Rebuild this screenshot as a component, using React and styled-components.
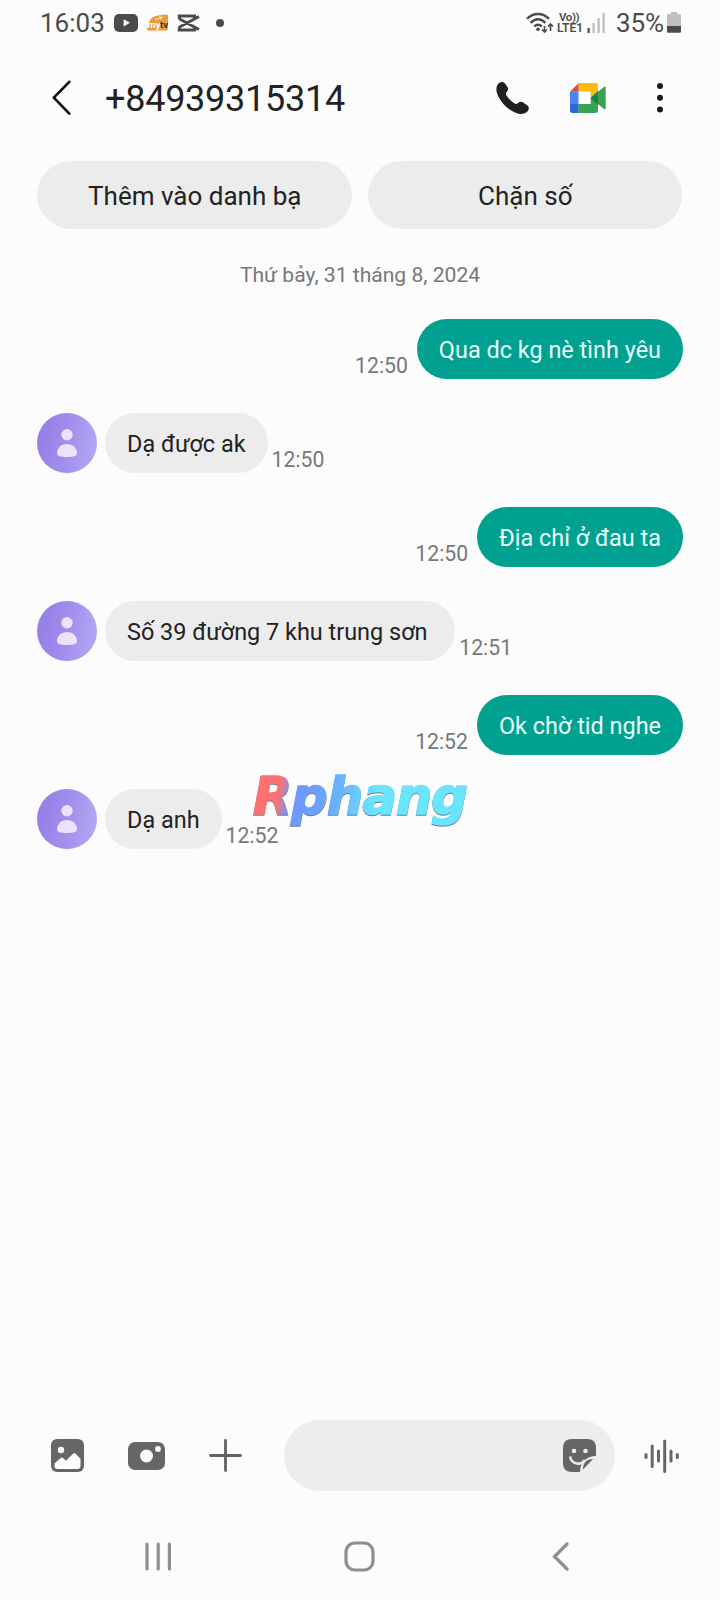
import React from "react";
import styled, { createGlobalStyle } from "styled-components";

const messages = [
  { id: 1, text: "Qua dc kg nè tình yêu", time: "12:50", sent: true },
  { id: 2, text: "Dạ được ak", time: "12:50", sent: false },
  { id: 3, text: "Địa chỉ ở đau ta", time: "12:50", sent: true },
  { id: 4, text: "Số 39 đường 7 khu trung sơn ", time: "12:51", sent: false },
  { id: 5, text: "Ok chờ tid nghe", time: "12:52", sent: true },
  { id: 6, text: "Dạ anh", time: "12:52", sent: false },
];

const StatusBar = () => (
  <Status>
    <StatusTime>16:03</StatusTime>
    <StatusIcons>
      <svg width="24" height="18" viewBox="0 0 24 18">
        <rect width="24" height="18" rx="5" fill="#4b4b4b" />
        <path d="M9.7 5.2v7.2l6.3-3.6z" fill="#fcfcfc" />
      </svg>
      <svg width="21" height="17" viewBox="0 0 21 17">
        <path
          d="M0 15.5C1 8 4 3.5 8 2.2 12 1 17 .4 19 .4c1.5 0 2 .6 2 2v12c0 1.5-.8 2.2-2 2.2H2c-1.2 0-2-.3-2-1.1z"
          fill="#ee9a3c"
        />
        <path d="M8 5.8 16 3M12.500 2l2 3.500" stroke="#fbe3c0" strokeWidth="1.2" />
        <text x="0.5" y="13.5" fontSize="9.5" fontWeight="700" fill="#fff">
          my
        </text>
        <text x="13" y="13.5" fontSize="9.5" fontWeight="700" fill="#3c3c3c">
          tv
        </text>
      </svg>
      <svg width="23" height="18" viewBox="0 0 23 18" fill="none" stroke="#4b4b4b">
        <path
          d="M22 2.5 3.500 12.5c-1 .6-1.300 1-1.300 2V16h15.300v-2.500M22 15.500 3.500 5.500c-1-.6-1.300-1-1.300-2V2h15.300v2.500"
          strokeWidth="3"
        />
      </svg>
      <Dot />
    </StatusIcons>
    <StatusRight>
      <svg width="28" height="22" viewBox="0 0 28 22" fill="none" stroke="#4b4b4b">
        <path d="M1 6.8C7.5.4 16.500.4 23 6.800" strokeWidth="2.4" />
        <path d="M4.600 10.800c4.700-4.400 10.100-4.400 14.800 0" strokeWidth="2.4" />
        <path d="M8.200 14.400c2.500-2.200 5.100-2.200 7.600 0" strokeWidth="2.4" />
        <circle cx="12" cy="17.300" r="1.8" fill="#4b4b4b" stroke="none" />
        <path
          d="M18.500 14v6M16 17.500l2.500 2.500 2.500-2.500M24.500 19v-6M22 14.500l2.500-2.500 2.500 2.500"
          strokeWidth="1.7"
        />
      </svg>
      <Volte>
        <span>Vo))</span>
        <span>LTE1</span>
      </Volte>
      <svg width="20" height="20" viewBox="0 0 20 20">
        <rect x="0.500" y="15" width="2.200" height="5" fill="#4b4b4b" />
        <rect x="5.500" y="10" width="2.200" height="10" fill="#bcbcbc" />
        <rect x="10.500" y="5" width="2.200" height="15" fill="#bcbcbc" />
        <rect x="15.500" y="0" width="2.200" height="20" fill="#bcbcbc" />
      </svg>
      <Percent>35%</Percent>
      <svg width="14" height="21" viewBox="0 0 14 21">
        <path
          d="M4 0h6v2h2.500c1 0 1.500.5 1.500 1.500V14H0V3.500C0 2.500.5 2 1.500 2H4z"
          fill="#bfbfbf"
        />
        <path
          d="M0 14h14v5.200c0 1-.5 1.500-1.500 1.500h-11c-1 0-1.500-.5-1.500-1.500z"
          fill="#4b4b4b"
        />
      </svg>
    </StatusRight>
  </Status>
);

const Header = () => (
  <HeaderBar>
    <svg width="19" height="36" viewBox="0 0 19 36" fill="none">
      <path
        d="M17.300 1.800 1.800 17.700l15.500 15.900"
        stroke="#0a0a0a"
        strokeWidth="2.6"
        strokeLinecap="round"
        strokeLinejoin="round"
      />
    </svg>
    <Title>+84939315314</Title>
    <HeaderActions>
      <svg width="34" height="34" viewBox="0 0 34 34">
        <path
          d="M2.500 2.600C4.200.9 6.800.1 8.600 1.900l2.700 3.800c1.300 2 .9 3.600-.4 5.100-1.200 1.300-1.200 2.200-.5 3.400 1.600 2.900 5.300 6.700 8.200 8.300 1.300.7 2.300.5 3.500-.6 1.500-1.300 3.200-1.600 5.100-.4l4.200 3c2 1.700 1.700 4 .2 5.700-2.300 2.500-5.600 3.300-9.200 2.500C12.500 30.200 3 20 .7 11 0 7.700.5 4.700 2.500 2.600z"
          fill="#1f1f1f"
        />
      </svg>
      <svg width="36" height="30" viewBox="0 0 36 30">
        <path d="M0 8.700h8.700V0z" fill="#e04a3a" />
        <path d="M0 8.700h8.700V21H0z" fill="#4a84f0" />
        <path d="M0 21h8.700v9H2.500C1 30 0 29 0 27.500z" fill="#2f66cf" />
        <path d="M8.700 0h17C27.200 0 28 1 28 2.500V8l-7.500 7V8.700H8.700z" fill="#fbbc0c" />
        <path d="M8.700 21h11.800v-6l7.500 6v6.500c0 1.500-.8 2.500-2.300 2.500h-17z" fill="#35a453" />
        <path d="m28 8.500 6-4.600c1-.7 1.700-.4 1.700.7v20.800c0 1.100-.8 1.400-1.700.7L28 21z" fill="#35a453" />
        <path d="M28 8v14l-7.700-7z" fill="#1d8240" />
        <path d="M8.700 8.700h11.800V21H8.700z" fill="#fff" />
      </svg>
      <svg width="8" height="32" viewBox="0 0 8 32" fill="#1a1a1a">
        <circle cx="4" cy="4" r="3" />
        <circle cx="4" cy="15.700" r="3" />
        <circle cx="4" cy="27.500" r="3" />
      </svg>
    </HeaderActions>
  </HeaderBar>
);

const ContactAvatar = () => (
  <Avatar>
    <svg width="20" height="28" viewBox="0 0 20 28" fill="#ebe3fd">
      <circle cx="10" cy="5.700" r="5.700" />
      <path d="M0 24.500C0 19 4 15 10 15s10 4 10 9.500c0 2.500-4 3.500-10 3.500S0 27 0 24.500z" />
    </svg>
  </Avatar>
);

const Message = ({ message }) => (
  <MessageRow $sent={message.sent}>
    {!message.sent && <ContactAvatar />}
    <Bubble $sent={message.sent}>{message.text}</Bubble>
    <Time $sent={message.sent}>{message.time}</Time>
  </MessageRow>
);

const Composer = () => (
  <ComposerBar>
    <svg width="33" height="33" viewBox="0 0 33 33">
      <rect width="33" height="33" rx="6" fill="#666" />
      <circle cx="10" cy="11" r="3.200" fill="#fcfcfc" />
      <path
        d="m3.500 24.500 6.200-5.400c.8-.6 1.500-.6 2.200 0l3 2.600 7.200-7c.9-.8 1.700-.8 2.500 0l4.900 5V27c0 2-1 3-3 3h-20c-2 0-3-1-3-3z"
        fill="#fcfcfc"
      />
    </svg>
    <svg width="37" height="28" viewBox="0 0 37 28">
      <rect width="37" height="28" rx="7" fill="#666" />
      <circle cx="18.500" cy="14" r="6.500" fill="#fcfcfc" />
      <circle cx="30" cy="7" r="2.900" fill="#fcfcfc" />
    </svg>
    <svg width="33" height="33" viewBox="0 0 33 33">
      <path
        d="M16.500 1.500v30M1.500 16.500h30"
        stroke="#626262"
        strokeWidth="2.8"
        strokeLinecap="round"
      />
    </svg>
    <MessageField>
      <svg width="33" height="33" viewBox="0 0 33 33" fill="none">
        <path
          d="M9 0h15c6 0 9 3 9 9v8c-9 0-16 6-16 16H9c-6 0-9-3-9-9V9c0-6 3-9 9-9z"
          fill="#666"
        />
        <circle cx="11" cy="12" r="2.300" fill="#ededed" />
        <circle cx="22.500" cy="12" r="2.300" fill="#ededed" />
        <path d="M7 17.500c2 8.500 11 9 15 3.500" stroke="#ededed" strokeWidth="2.5" />
        <path d="M20 30.500C20 24 23.500 20 30 20z" fill="#666" />
      </svg>
    </MessageField>
    <svg
      width="36"
      height="34"
      viewBox="0 0 36 34"
      stroke="#666"
      strokeWidth="3"
      strokeLinecap="round"
    >
      <path d="M2 15.500v3M8.200 7v20.500M14.500 12v10M20.700 2v30.500M27 12v10M33.300 15.500v3" />
    </svg>
  </ComposerBar>
);

const NavigationBar = () => (
  <NavBar>
    <svg width="27" height="29" viewBox="0 0 27 29">
      <path
        d="M2 2v25M13.200 2v25M24.400 2v25"
        stroke="#8e8e8e"
        strokeWidth="3.2"
        strokeLinecap="round"
      />
    </svg>
    <svg width="31" height="31" viewBox="0 0 31 31" fill="none">
      <rect x="2" y="2" width="27" height="27" rx="9" stroke="#8e8e8e" strokeWidth="3.2" />
    </svg>
    <svg width="17" height="29" viewBox="0 0 17 29" fill="none">
      <path
        d="M15 2 2.500 14.500 15 27"
        stroke="#8e8e8e"
        strokeWidth="3.2"
        strokeLinecap="round"
      />
    </svg>
  </NavBar>
);

const App = () => (
  <>
    <GlobalStyle />
    <Screen>
      <StatusBar />
      <Header />
      <ContactActions>
        <PillButton>Thêm vào danh bạ</PillButton>
        <PillButton>Chặn số</PillButton>
      </ContactActions>
      <DateLabel>Thứ bảy, 31 tháng 8, 2024</DateLabel>
      <Conversation>
        {messages.map((message) => (
          <Message key={message.id} message={message} />
        ))}
        <Watermark>Rphang</Watermark>
      </Conversation>
      <Composer />
      <NavigationBar />
    </Screen>
  </>
);

// Styled Components
const GlobalStyle = createGlobalStyle`
  * {
    box-sizing: border-box;
  }

  body {
    margin: 0;
    background: #fcfcfc;
    font-family: Roboto, "Noto Sans", sans-serif;
  }

  svg {
    display: block;
    flex-shrink: 0;
  }
`;

const Screen = styled.div`
  display: flex;
  flex-direction: column;
  width: 720px;
  height: 1600px;
  overflow: hidden;
  background: #fcfcfc;
`;

const Status = styled.div`
  display: flex;
  align-items: center;
  height: 45px;
  padding: 0 39px 0 40px;
  color: #4b4b4b;
`;

const StatusTime = styled.span`
  width: 74px;
  font-size: 26px;
  line-height: 30px;
`;

const StatusIcons = styled.div`
  display: flex;
  align-items: center;
  gap: 9px;
`;

const Dot = styled.span`
  width: 8px;
  height: 8px;
  margin-left: 7px;
  border-radius: 50%;
  background: #4b4b4b;
`;

const StatusRight = styled.div`
  display: flex;
  align-items: center;
  margin-left: auto;
`;

const Volte = styled.div`
  display: flex;
  flex-direction: column;
  width: 26px;
  margin: 0 4px 0 3px;
  font-size: 12px;
  font-weight: 600;
  line-height: 11px;
  white-space: nowrap;

  span:first-child {
    padding-left: 2px;
    font-size: 11.5px;
    letter-spacing: -0.4px;
  }
`;

const Percent = styled.span`
  margin: 0 3px 0 9px;
  font-size: 26px;
  line-height: 30px;
  letter-spacing: -0.1px;
`;

const HeaderBar = styled.header`
  display: flex;
  align-items: center;
  height: 106px;
  padding: 0 56px 0 52px;
`;

const Title = styled.h1`
  margin: 2px 0 0 34px;
  color: #222;
  font-size: 36px;
  font-weight: 400;
  line-height: 44px;
  letter-spacing: -0.25px;
`;

const HeaderActions = styled.div`
  display: flex;
  align-items: center;
  gap: 40px;
  margin-left: auto;

  svg:last-child {
    margin-left: 10px;
  }
`;

const ContactActions = styled.div`
  display: grid;
  grid-template-columns: 1fr 1fr;
  gap: 16px;
  margin-top: 10px;
  padding: 0 38px 0 37px;
`;

const PillButton = styled.button`
  height: 68px;
  padding: 2px 0 0 1px;
  border: none;
  border-radius: 34px;
  background: #ececec;
  color: #222;
  font-family: inherit;
  font-size: 26px;
`;

const DateLabel = styled.div`
  margin-top: 32px;
  color: #777;
  font-size: 21.1px;
  line-height: 28px;
  text-align: center;
`;

const Conversation = styled.main`
  position: relative;
  display: flex;
  flex: 1;
  flex-direction: column;
  gap: 34px;
  padding: 30px 37px 0;
`;

const MessageRow = styled.div`
  display: flex;
  flex-direction: ${({ $sent }) => ($sent ? "row-reverse" : "row")};
  align-items: flex-end;
  height: 60px;
`;

const Avatar = styled.div`
  display: flex;
  align-items: center;
  justify-content: center;
  width: 60px;
  height: 60px;
  margin-right: 8px;
  border-radius: 50%;
  background: linear-gradient(100deg, #9780e8 15%, #a391ec 55%, #b2a5f2 90%);
`;

const Bubble = styled.div`
  height: 60px;
  padding: 1px 22px 0;
  border-radius: 30px;
  background: ${({ $sent }) => ($sent ? "#00a191" : "#ececec")};
  color: ${({ $sent }) => ($sent ? "#e9fffb" : "#222")};
  font-size: 23.45px;
  line-height: 60px;
  white-space: pre;
`;

const Time = styled.span`
  margin: ${({ $sent }) => ($sent ? "0 9px 0 0" : "0 0 0 4px")};
  color: #777;
  font-size: 21.2px;
  line-height: 26px;
`;

const Watermark = styled.div`
  position: absolute;
  top: 476px;
  left: 253px;
  padding-right: 4px;
  background: linear-gradient(
    100deg,
    #ff7070 13%,
    #6f97ff 19%,
    #6b9dff 28%,
    #69b8ff 42%,
    #6be4ff 56%
  );
  background-clip: text;
  -webkit-background-clip: text;
  -webkit-text-stroke: 1.5px transparent;
  color: transparent;
  filter: drop-shadow(0 1.5px 0.5px #667c8a);
  font-family: "DejaVu Sans", sans-serif;
  font-size: 51px;
  font-style: italic;
  font-weight: 700;
  letter-spacing: -0.9px;
  line-height: 64px;
`;

const ComposerBar = styled.footer`
  display: flex;
  align-items: center;
  height: 71px;
  padding: 0 40px 0 51px;

  > svg:nth-child(2) {
    margin: 0 44px;
  }
`;

const MessageField = styled.div`
  display: flex;
  align-items: center;
  justify-content: flex-end;
  width: 331px;
  height: 71px;
  margin: 0 auto 0 42px;
  padding-right: 19px;
  border-radius: 36px;
  background: #ededed;
`;

const NavBar = styled.nav`
  display: flex;
  align-items: center;
  justify-content: space-between;
  height: 109px;
  padding: 22px 151px 0 145px;

  svg:nth-child(2) {
    margin-right: 6px;
  }
`;

export default App;
